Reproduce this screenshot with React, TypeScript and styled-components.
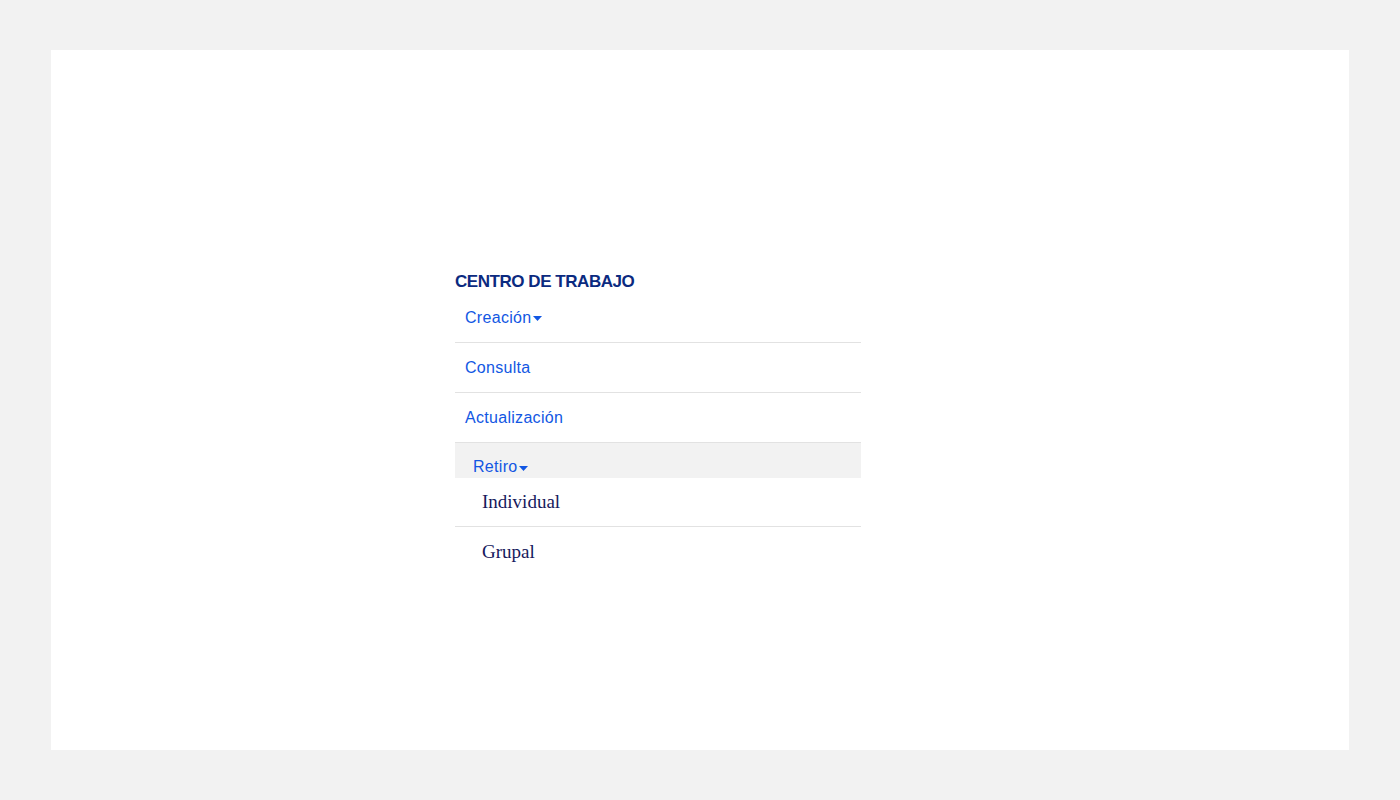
import React from 'react';
import styled, { createGlobalStyle } from 'styled-components';

const GlobalStyle = createGlobalStyle`
  html, body {
    margin: 0;
    padding: 0;
    background: #f2f2f2;
  }
`;

interface ItemProps {
  label: string;
  caret?: boolean;
}

const items: ItemProps[] = [
  { label: 'Creación', caret: true },
  { label: 'Consulta' },
  { label: 'Actualización' },
];

const subItems = ['Individual', 'Grupal'];

const Caret = () => (
  <CaretSvg width="9" height="5" viewBox="0 0 9 5">
    <path d="M0 0h9L4.5 5z" fill="currentColor" />
  </CaretSvg>
);

const App: React.FC = () => {
  return (
    <Page>
      <GlobalStyle />
      <Panel>
        <Menu>
          <Title>CENTRO DE TRABAJO</Title>
          {items.map((item) => (
            <Item key={item.label}>
              <Link>
                {item.label}
                {item.caret && <Caret />}
              </Link>
            </Item>
          ))}
          <ActiveItem>
            <Link>
              Retiro
              <Caret />
            </Link>
          </ActiveItem>
          <SubList>
            {subItems.map((s, i) => (
              <SubItem key={s} last={i === subItems.length - 1}>
                {s}
              </SubItem>
            ))}
          </SubList>
        </Menu>
      </Panel>
    </Page>
  );
};

const Page = styled.div`
  padding: 50px 51px;
  height: 800px;
  box-sizing: border-box;
`;

const Panel = styled.div`
  background: #ffffff;
  height: 700px;
  padding: 220px 0 0 404px;
  box-sizing: border-box;
`;

const Menu = styled.div`
  width: 406px;
  display: flex;
  flex-direction: column;
`;

const Title = styled.h2`
  margin: 0;
  font-family: 'Liberation Sans', Arial, sans-serif;
  font-weight: 700;
  font-size: 17px;
  letter-spacing: -0.45px;
  line-height: 23px;
  color: #0b2a80;
`;

const Item = styled.div`
  height: 50px;
  box-sizing: border-box;
  display: flex;
  align-items: center;
  padding-left: 10px;
  border-bottom: 1px solid #e2e2e2;
`;

const ActiveItem = styled.div`
  height: 35px;
  background: #f2f2f2;
  display: flex;
  align-items: flex-end;
  padding-left: 18px;
  padding-bottom: 2px;
  box-sizing: border-box;
`;

const Link = styled.a`
  font-family: 'Liberation Sans', Arial, sans-serif;
  font-size: 16px;
  letter-spacing: 0.3px;
  color: #1257e3;
  display: inline-flex;
  align-items: center;
  cursor: pointer;
`;

const CaretSvg = styled.svg`
  margin-left: 2px;
  margin-top: 2px;
`;

const SubList = styled.div`
  display: flex;
  flex-direction: column;
`;

const SubItem = styled.div<{ last?: boolean }>`
  height: 49px;
  box-sizing: border-box;
  display: flex;
  align-items: center;
  padding-left: 27px;
  font-family: 'Liberation Serif', 'Times New Roman', serif;
  font-size: 19px;
  color: #16195c;
  border-bottom: ${(p) => (p.last ? 'none' : '1px solid #e2e2e2')};
`;

export default App;
